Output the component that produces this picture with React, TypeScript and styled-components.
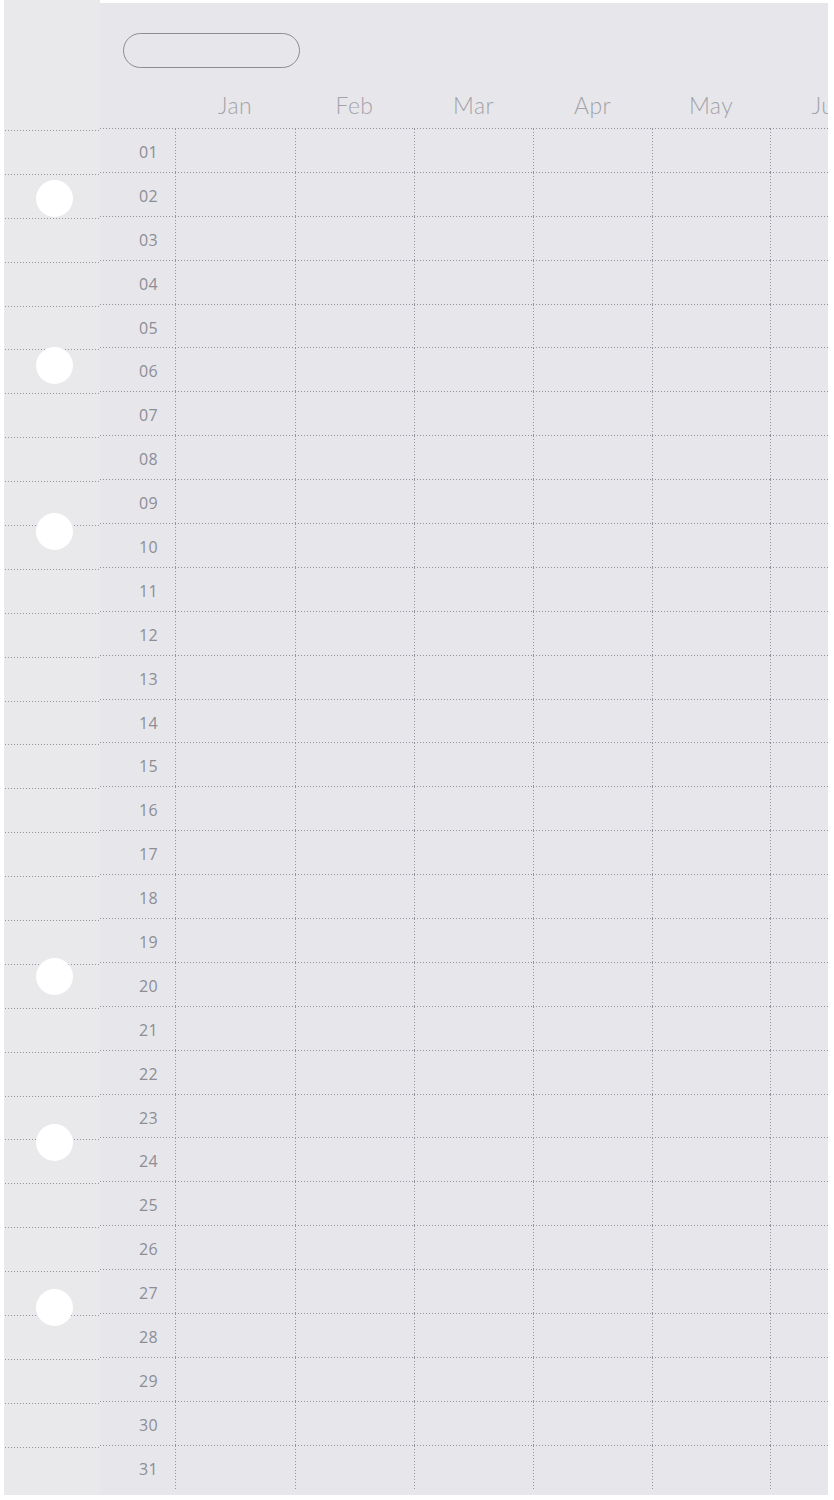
import React from "react";
import styled, { createGlobalStyle } from "styled-components";

const GlobalStyle = createGlobalStyle`
  html, body { margin: 0; padding: 0; background: #ffffff; }
  body { font-family: "Open Sans", "Liberation Sans", sans-serif; }
`;

const DOT = "#93939b";
const dotsH = `linear-gradient(to right, ${DOT} 0 1.2px, transparent 1.2px 3px)`;
const dotsV = `linear-gradient(to bottom, ${DOT} 0 1.2px, transparent 1.2px 3px)`;

const ROW_H = 43.9;
const MONTHS = ["Jan", "Feb", "Mar", "Apr", "May", "Jun"];
const HOLES = [198, 365, 531, 976, 1142, 1307];

const Page = styled.div`
  display: flex;
  width: 834px;
  height: 1500px;
  padding-left: 4px;
  box-sizing: border-box;
  overflow: hidden;
`;

const Strip = styled.div`
  position: relative;
  width: 96px;
  height: 1495px;
  background: #e9e9ec;
  display: flex;
  flex-direction: column;
  padding-top: 130px;
  box-sizing: border-box;
`;

const StripRow = styled.div`
  height: ${ROW_H}px;
  flex: none;
  background-image: ${dotsH};
  background-size: 3px 1px;
  background-repeat: repeat-x;
  background-position: 1px 0;
`;

const Hole = styled.div`
  position: absolute;
  left: 32px;
  width: 37px;
  height: 37px;
  border-radius: 50%;
  background: #ffffff;
`;

const Sheet = styled.div`
  margin-top: 3px;
  width: 728px;
  height: 1492px;
  background: #e7e7eb;
  overflow: hidden;
  display: flex;
  flex-direction: column;
`;

const Header = styled.div`
  height: 125px;
  flex: none;
  display: flex;
  flex-direction: column;
  padding-top: 30px;
  box-sizing: border-box;
`;

const TitlePill = styled.div`
  margin-left: 23px;
  width: 177px;
  height: 35px;
  box-sizing: border-box;
  border: 1.5px solid #8c8c92;
  border-radius: 18px;
`;

const Columns = styled.div`
  display: grid;
  grid-template-columns: 75px 120px 119px 119px 119px 118px 119px;
`;

const MonthRow = styled(Columns)`
  margin-top: 23px;
  height: 28px;
  align-items: center;
`;

const MonthLabel = styled.div`
  text-align: center;
  font-family: "Lato", "Open Sans", sans-serif;
  font-weight: 300;
  font-size: 23px;
  line-height: 28px;
  color: #a3a3a9;
  letter-spacing: 0.4px;
  white-space: nowrap;
`;

const Grid = styled.div`
  display: flex;
  flex-direction: column;
`;

const Row = styled(Columns)`
  height: ${ROW_H}px;
  flex: none;
`;

const DayLabel = styled.div`
  background-image: ${dotsH};
  background-size: 3px 1px;
  background-repeat: repeat-x;
  display: flex;
  align-items: center;
  justify-content: flex-end;
  padding: 4px 17px 0 0;
  font-family: "Open Sans", "Liberation Sans", sans-serif;
  font-size: 16px;
  color: #8d8d95;
  letter-spacing: 0.3px;
`;

const Cell = styled.div`
  background-image: ${dotsH}, ${dotsV};
  background-size: 3px 1px, 1px 3px;
  background-repeat: repeat-x, repeat-y;
  background-position: 0 0, 0 1px;
`;

export default function App() {
  const days = Array.from({ length: 31 }, (_, i) => String(i + 1).padStart(2, "0"));
  return (
    <>
      <GlobalStyle />
      <Page>
        <Strip>
          {days.map((d) => (
            <StripRow key={d} />
          ))}
          {HOLES.map((y) => (
            <Hole key={y} style={{ top: y - 18.5 }} />
          ))}
        </Strip>
        <Sheet>
          <Header>
            <TitlePill />
            <MonthRow>
              <span />
              {MONTHS.map((m) => (
                <MonthLabel key={m}>{m}</MonthLabel>
              ))}
            </MonthRow>
          </Header>
          <Grid>
            {days.map((d) => (
              <Row key={d}>
                <DayLabel>{d}</DayLabel>
                {MONTHS.map((m) => (
                  <Cell key={m} />
                ))}
              </Row>
            ))}
          </Grid>
        </Sheet>
      </Page>
    </>
  );
}
